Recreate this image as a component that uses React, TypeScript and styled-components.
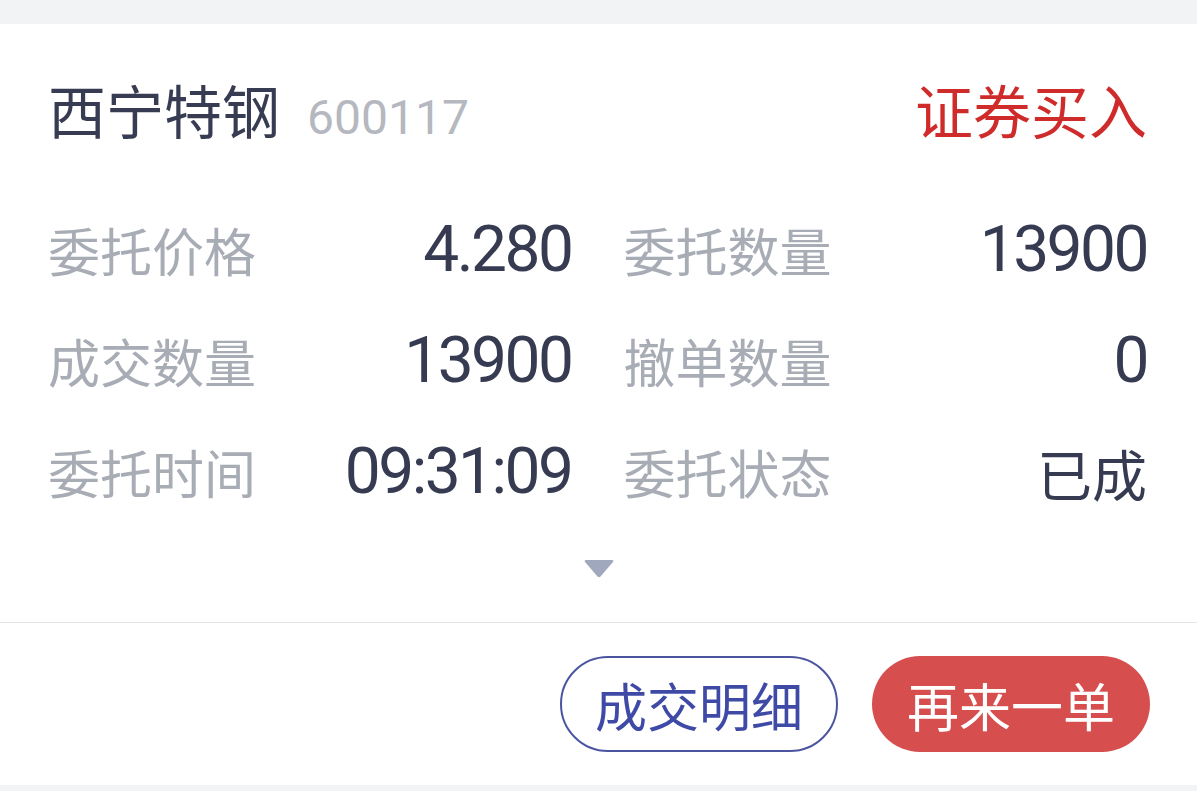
import React, { FC } from "react";
import styled, { createGlobalStyle } from "styled-components";

const GlobalStyle = createGlobalStyle`
  html, body {
    margin: 0;
    padding: 0;
    background: #f2f3f5;
  }
  body {
    font-family: "Noto Sans CJK SC", "Noto Sans", sans-serif;
  }
`;

const Page = styled.div`
  width: 1197px;
  height: 791px;
  padding-top: 24px;
  box-sizing: border-box;
  background: #f2f3f5;
  overflow: hidden;
`;

const Card = styled.div`
  background: #ffffff;
  height: 761px;
  display: flex;
  flex-direction: column;
`;

const Header = styled.div`
  display: flex;
  align-items: center;
  justify-content: space-between;
  padding: 45px 50px 0 48px;
  height: 80px;
`;

const TitleGroup = styled.div`
  display: flex;
  align-items: baseline;
  gap: 27px;
`;

const Name = styled.span`
  font-size: 58px;
  line-height: 80px;
  color: #373c52;
`;

const Code = styled.span`
  font-family: Roboto, "Liberation Sans", sans-serif;
  font-size: 48px;
  color: #b5b8bf;
`;

const Direction = styled.span<{ $buy?: boolean }>`
  font-size: 58px;
  line-height: 80px;
  color: ${(p) => (p.$buy ? "#cf2b2b" : "#2b8a3e")};
`;

const Grid = styled.div`
  display: grid;
  grid-template-columns: 1fr 1fr;
  column-gap: 52px;
  padding: 0 50px 0 48px;
  margin-top: 45px;
`;

const Cell = styled.div`
  display: flex;
  align-items: center;
  justify-content: space-between;
  height: 111px;
`;

const Label = styled.span`
  font-size: 52px;
  color: #a8acb5;
`;

const Value = styled.span<{ $cjk?: boolean }>`
  font-family: ${(p) =>
    p.$cjk ? '"Noto Sans CJK SC", sans-serif' : 'Roboto, "Liberation Sans", sans-serif'};
  font-size: ${(p) => (p.$cjk ? "55px" : "64px")};
  letter-spacing: ${(p) => (p.$cjk ? "0" : "-2.5px")};
  color: #363b51;
`;

const Toggle = styled.div`
  display: flex;
  justify-content: center;
  padding: 33px 0 44px;
`;

const Divider = styled.div`
  height: 1px;
  background: #e5e5e7;
`;

const Footer = styled.div`
  display: flex;
  justify-content: flex-end;
  gap: 34px;
  padding: 33px 47px 33px 0;
`;

const Button = styled.button<{ $primary?: boolean }>`
  width: 278px;
  height: 96px;
  border-radius: 48px;
  box-sizing: border-box;
  font-family: "Noto Sans CJK SC", sans-serif;
  font-size: 52px;
  display: flex;
  align-items: center;
  justify-content: center;
  padding: 0;
  border: ${(p) => (p.$primary ? "none" : "2px solid #4b559f")};
  background: ${(p) => (p.$primary ? "#d64e4e" : "#ffffff")};
  color: ${(p) => (p.$primary ? "#ffffff" : "#3f4aa6")};
`;

const rows = [
  ["委托价格", "4.280", "委托数量", "13900"],
  ["成交数量", "13900", "撤单数量", "0"],
  ["委托时间", "09:31:09", "委托状态", "已成"],
];

const App: FC = () => {
  return (
    <Page>
      <GlobalStyle />
      <Card>
        <Header>
          <TitleGroup>
            <Name>西宁特钢</Name>
            <Code>600117</Code>
          </TitleGroup>
          <Direction $buy>证券买入</Direction>
        </Header>
        <Grid>
          {rows.map((r) => (
            <React.Fragment key={r[0]}>
              <Cell>
                <Label>{r[0]}</Label>
                <Value>{r[1]}</Value>
              </Cell>
              <Cell>
                <Label>{r[2]}</Label>
                <Value $cjk={/[^\d.:]/.test(r[3])}>{r[3]}</Value>
              </Cell>
            </React.Fragment>
          ))}
        </Grid>
        <Toggle>
          <svg width="30" height="18" viewBox="0 0 30 18">
            <path d="M2 0 H28 Q30 0 29 2 L16.5 16.5 Q15 18 13.5 16.5 L1 2 Q0 0 2 0 Z" fill="#9fa8bd" />
          </svg>
        </Toggle>
        <Divider />
        <Footer>
          <Button>成交明细</Button>
          <Button $primary>再来一单</Button>
        </Footer>
      </Card>
    </Page>
  );
};

export default App;
